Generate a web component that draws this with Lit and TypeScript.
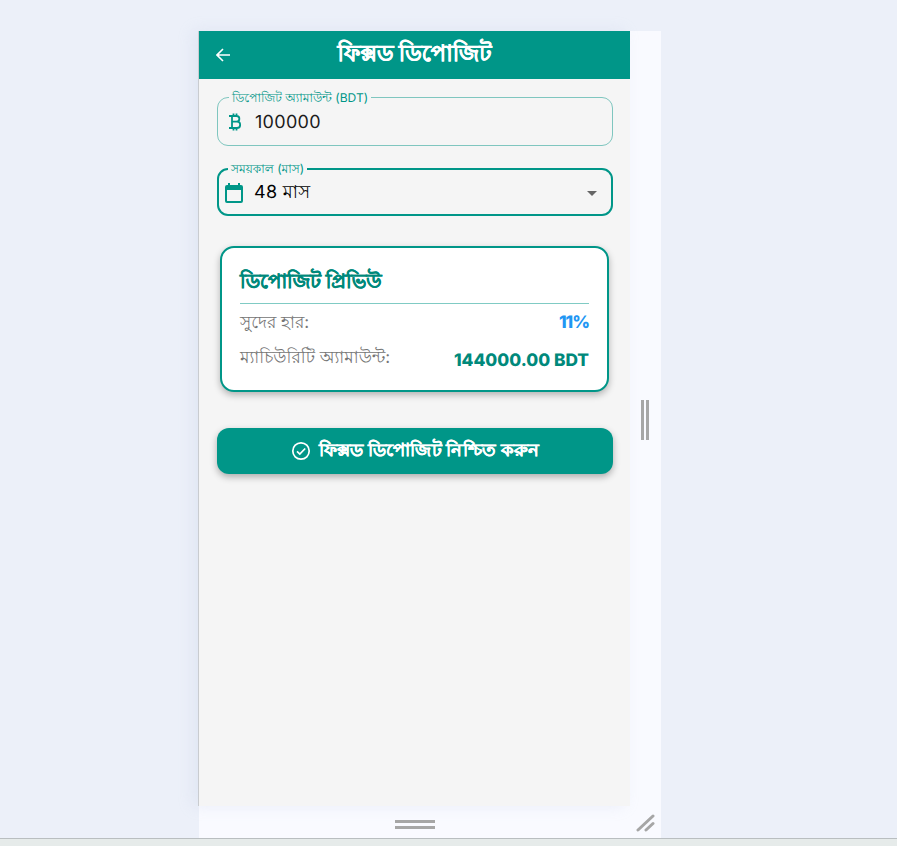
import { LitElement, css, html } from "lit";
import { customElement } from "lit/decorators.js";

@customElement("app-root")
export class AppRoot extends LitElement {
  static styles = css`
    :host {
      display: block;
      height: 846px;
      overflow: hidden;
      background: #ecf0f9;
      font-family: Inter, "Open Sans", "Noto Sans", sans-serif;
      text-rendering: geometricPrecision;
    }
    .desk {
      padding: 31px 0 0 199px;
      height: 807px;
    }
    .frame {
      width: 462px;
      height: 807px;
      display: grid;
      grid-template-columns: 431px 31px;
      grid-template-rows: 775px 32px;
      background: #f9faff;
    }
    .phone {
      background: #f5f5f5;
      display: flex;
      flex-direction: column;
      box-shadow: -1px 0 0 #c9ccd0, -6px 0 14px rgba(180, 195, 225, 0.22);
    }
    .appbar {
      height: 48px;
      flex: none;
      background: #009688;
      color: #fff;
      display: flex;
      align-items: center;
      justify-content: center;
      position: relative;
      font-size: 22.5px;
      font-weight: 700;
      -webkit-text-stroke: 0.3px #fff;
    }
    .back {
      position: absolute;
      left: 17px;
      top: 17px;
      width: 14px;
      height: 14px;
    }
    .content {
      padding: 11px 17px 0 18px;
      display: flex;
      flex-direction: column;
    }
    fieldset {
      margin: 0;
      padding: 0 10px 0 11px;
      display: flex;
      align-items: center;
      background: #f5f5f5;
      box-sizing: border-box;
      width: 396px;
      min-width: 0;
    }
    legend {
      font-size: 12.1px;
      line-height: 15px;
      color: #009688;
      padding: 0 3px;
    }
    .amount {
      height: 56px;
      border: 1px solid #7fc6bf;
      border-radius: 11px;
    }
    .term {
      height: 55px;
      margin-top: 15px;
      border: 2px solid #009688;
      border-radius: 11px;
      padding-left: 6px;
    }
    .term legend {
      margin-left: 3px;
    }
    .value {
      font-size: 18px;
      color: #1b1b1b;
      flex: 1;
      letter-spacing: 0.3px;
    }
    .term .value {
      color: #000;
    }
    .amount .value {
      margin-left: 14px;
      margin-top: 7px;
    }
    .term .value {
      margin-left: 11px;
      margin-top: 2px;
    }
    .taka {
      width: 12px;
      height: 18px;
      flex: none;
      margin-top: 6px;
    }
    .cal {
      width: 18px;
      height: 20px;
      flex: none;
      margin-top: 1px;
    }
    .caret {
      width: 0;
      height: 0;
      border-left: 5px solid transparent;
      border-right: 5px solid transparent;
      border-top: 5px solid #666;
      margin: 1px 4px 0 0;
    }
    .card {
      margin: 30px 4px 0 3px;
      height: 146px;
      box-sizing: border-box;
      border: 2px solid #009688;
      border-radius: 14px;
      background: #fff;
      box-shadow: 0 3px 7px rgba(0, 0, 0, 0.28);
      padding: 17px 18px 0 18px;
    }
    .card h2 {
      margin: 0;
      font-size: 19.7px;
      line-height: 32px;
      font-weight: 700;
      color: #00897b;
      border-bottom: 1px solid #80cbc4;
      height: 38px;
      -webkit-text-stroke: 0.3px #00897b;
    }
    .row {
      display: flex;
      justify-content: space-between;
      align-items: center;
      height: 38px;
      font-size: 17px;
      color: #757575;
    }
    .row.first {
      height: 37px;
    }
    .row span {
      margin-top: -3px;
    }
    .row.first span {
      margin-top: 3px;
    }
    .row b {
      font-size: 17.3px;
      font-weight: 800;
    }
    .rate {
      color: #2196f3;
      letter-spacing: -1px;
    }
    .maturity {
      color: #00897b;
    }
    .confirm {
      margin-top: 36px;
      height: 46px;
      border: none;
      border-radius: 12px;
      background: #009688;
      color: #fff;
      font: inherit;
      font-size: 18.25px;
      font-weight: 700;
      letter-spacing: 0.25px;
      display: flex;
      align-items: center;
      justify-content: center;
      gap: 8px;
      box-shadow: 0 3px 7px rgba(0, 0, 0, 0.3);
      -webkit-text-stroke: 0.2px #fff;
    }
    .confirm svg {
      width: 20px;
      height: 20px;
    }
    .gutter {
      display: flex;
      align-items: center;
      justify-content: center;
    }
    .side {
      padding-right: 1px;
      padding-top: 3px;
    }
    .vbars {
      width: 8px;
      height: 40px;
      border-left: 3px solid #a6a6a6;
      border-right: 3px solid #a6a6a6;
      box-sizing: border-box;
    }
    .hbars {
      width: 40px;
      height: 9px;
      border-top: 3px solid #a6a6a6;
      border-bottom: 3px solid #a6a6a6;
      box-sizing: border-box;
      margin-top: 4px;
    }
    .grip {
      width: 20px;
      height: 20px;
      margin-top: 2px;
    }
    .taskbar {
      height: 8px;
      background: #e6ebea;
      border-top: 1px solid #b9bec0;
      box-sizing: border-box;
    }
  `;

  render() {
    return html`
      <div class="desk">
        <div class="frame">
          <div class="phone">
            <header class="appbar">
              <svg class="back" viewBox="0 0 14 14" fill="none" stroke="#fff" stroke-width="1.6">
                <path d="M14 7H1.500M7 1L1 7l6 6" />
              </svg>
              ফিক্সড ডিপোজিট
            </header>
            <div class="content">
              <fieldset class="amount">
                <legend>ডিপোজিট অ্যামাউন্ট (BDT)</legend>
                <svg class="taka" viewBox="0 0 12 18" fill="none" stroke="#009688" stroke-width="1.8">
                  <path d="M0 3h7.500a2.700 2.700 0 010 5.700H3h5a3.100 3.100 0 010 6.300H0M3 3v12M4.500 0.500V3M7.500 0.500V3M4.500 15v2.500M7.500 15v2.500" />
                </svg>
                <span class="value">100000</span>
              </fieldset>
              <fieldset class="term">
                <legend>সময়কাল (মাস)</legend>
                <svg class="cal" viewBox="0 0 18 20" fill="#009688">
                  <path d="M3 0h2v2h8V0h2v2h1A2 2 0 0118 4v14a2 2 0 01-2 2H2a2 2 0 01-2-2V4a2 2 0 012-2h1zM2 7v10.500a.5.5 0 00.5.5h13a.5.5 0 00.5-.5V7z" />
                </svg>
                <span class="value">48 মাস</span>
                <span class="caret"></span>
              </fieldset>
              <section class="card">
                <h2>ডিপোজিট প্রিভিউ</h2>
                <div class="row first"><span>সুদের হার:</span><b class="rate">11%</b></div>
                <div class="row"><span>ম্যাচিউরিটি অ্যামাউন্ট:</span><b class="maturity">144000.00 BDT</b></div>
              </section>
              <button class="confirm">
                <svg viewBox="0 0 20 20" fill="none" stroke="#fff" stroke-width="1.7">
                  <circle cx="10" cy="10" r="8.200" />
                  <path d="M6 10.300l2.800 2.800L14.200 7.500" />
                </svg>
                ফিক্সড ডিপোজিট নিশ্চিত করুন
              </button>
            </div>
          </div>
          <div class="gutter side"><span class="vbars"></span></div>
          <div class="gutter"><span class="hbars"></span></div>
          <div class="gutter">
            <svg class="grip" viewBox="0 0 20 20" fill="none" stroke="#a6a6a6" stroke-width="3" stroke-linecap="round">
              <path d="M2 17L17 3M10 17l7-6.500" />
            </svg>
          </div>
        </div>
      </div>
      <div class="taskbar"></div>
    `;
  }
}
